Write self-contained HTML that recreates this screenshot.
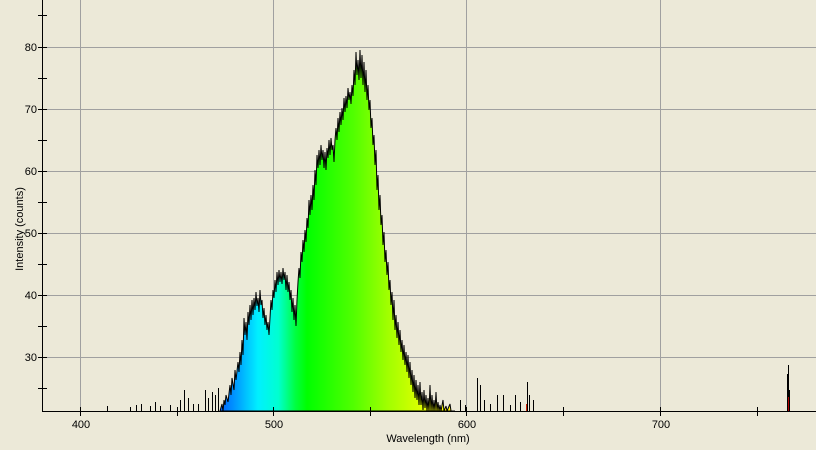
<!DOCTYPE html>
<html><head><meta charset="utf-8"><style>
html,body{margin:0;padding:0;background:#ECE9D8;}
svg{display:block;font-family:"Liberation Sans",sans-serif;}
</style></head><body>
<svg width="816" height="450" xmlns="http://www.w3.org/2000/svg">
<defs>
<linearGradient id="g" gradientUnits="userSpaceOnUse" x1="215" y1="0" x2="790" y2="0">
<stop offset="0" stop-color="#0050ff"/>
<stop offset="0.035" stop-color="#0098ff"/>
<stop offset="0.075" stop-color="#00f0ff"/>
<stop offset="0.11" stop-color="#00ffd0"/>
<stop offset="0.14" stop-color="#00ff40"/>
<stop offset="0.16" stop-color="#00ff00"/>
<stop offset="0.24" stop-color="#50ff00"/>
<stop offset="0.30" stop-color="#a0ff00"/>
<stop offset="0.37" stop-color="#e8ff00"/>
<stop offset="0.40" stop-color="#ffff00"/>
<stop offset="0.50" stop-color="#ffa000"/>
<stop offset="0.55" stop-color="#e02000"/>
<stop offset="1" stop-color="#a00000"/>
</linearGradient>
</defs>
<g stroke="#a0a0a0" stroke-width="1">
<line x1="80.5" y1="0" x2="80.5" y2="411"/><line x1="273.5" y1="0" x2="273.5" y2="411"/>
<line x1="466.5" y1="0" x2="466.5" y2="411"/><line x1="660.5" y1="0" x2="660.5" y2="411"/>
<line x1="42" y1="47.5" x2="816" y2="47.5"/><line x1="42" y1="109.5" x2="816" y2="109.5"/>
<line x1="42" y1="171.5" x2="816" y2="171.5"/><line x1="42" y1="233.5" x2="816" y2="233.5"/>
<line x1="42" y1="295.5" x2="816" y2="295.5"/><line x1="42" y1="357.5" x2="816" y2="357.5"/>
</g>
<path fill="url(#g)" stroke="#000" stroke-width="1" stroke-linejoin="bevel" d="M220,411 L222,404 223,411 224,400 225,405 226,395 228,402 230,385 231,395 232,378 234,390 235,370 236,380 238,362 239,372 240,352 241,365 242,340 243,355 244,318 245,335 246,322 247,340 248,312 249,325 250,305 251,320 252,300 253,315 254,298 255,310 256,292 257,306 258,298 259,312 260,290 261,305 262,300 263,318 264,308 265,325 266,315 267,330 268,322 269,335 270,318 271,300 272,310 273,290 274,298 275,280 276,292 277,272 278,285 279,270 280,282 281,272 282,284 283,268 284,280 285,272 286,290 287,275 288,292 289,282 290,300 291,290 292,312 293,298 294,320 295,305 296,326 297,300 298,282 299,268 300,278 301,252 302,262 303,240 304,252 305,230 306,242 307,218 308,228 309,200 310,215 311,195 312,210 313,185 314,200 315,170 316,185 317,155 318,168 319,150 320,165 321,145 322,160 323,150 324,168 325,152 326,170 327,148 328,158 329,140 330,155 331,138 332,150 333,145 334,162 335,140 336,128 337,140 338,118 339,132 340,112 341,125 342,108 343,120 344,98 345,112 346,96 347,108 348,88 349,100 350,92 351,104 352,85 353,96 354,70 355,85 356,52 357,75 358,60 359,80 360,50 361,78 362,55 363,85 364,62 365,92 366,70 367,100 368,85 369,110 370,100 371,128 372,118 373,145 374,135 375,165 376,150 377,190 378,175 379,210 380,195 381,225 382,215 383,245 384,232 385,262 386,250 387,275 388,262 389,290 390,280 391,305 392,292 393,320 394,300 395,330 396,315 397,338 398,322 399,345 400,330 401,352 402,340 403,360 404,345 405,365 406,352 407,372 408,355 409,378 410,362 411,385 412,370 413,392 414,375 415,398 416,380 417,400 418,385 419,405 420,382 421,405 422,392 423,410 424,390 425,408 426,395 427,411 428,398 429,411 430,385 431,411 432,395 433,411 434,400 435,411 436,392 437,411 438,402 439,411 440,405 441,411 443,400 444,411 446,406 447,411 450,404 451,411 455,411 Z"/>
<g stroke="#000" stroke-width="1">
<line x1="107.5" y1="411" x2="107.5" y2="406"/><line x1="130.5" y1="411" x2="130.5" y2="407"/>
<line x1="136.5" y1="411" x2="136.5" y2="405"/><line x1="141.5" y1="411" x2="141.5" y2="404"/>
<line x1="150.5" y1="411" x2="150.5" y2="406"/><line x1="155.5" y1="411" x2="155.5" y2="402"/>
<line x1="160.5" y1="411" x2="160.5" y2="406"/><line x1="170.5" y1="411" x2="170.5" y2="405"/>
<line x1="180.5" y1="411" x2="180.5" y2="400"/><line x1="184.5" y1="411" x2="184.5" y2="390"/>
<line x1="188.5" y1="411" x2="188.5" y2="398"/><line x1="193.5" y1="411" x2="193.5" y2="404"/>
<line x1="198.5" y1="411" x2="198.5" y2="404"/><line x1="205.5" y1="411" x2="205.5" y2="390"/>
<line x1="208.5" y1="411" x2="208.5" y2="398"/><line x1="212.5" y1="411" x2="212.5" y2="392"/>
<line x1="215.5" y1="411" x2="215.5" y2="395"/><line x1="218.5" y1="411" x2="218.5" y2="388"/>
<line x1="460.5" y1="411" x2="460.5" y2="400"/><line x1="465.5" y1="411" x2="465.5" y2="405"/>
<line x1="477.5" y1="411" x2="477.5" y2="378"/><line x1="480.5" y1="411" x2="480.5" y2="385"/>
<line x1="484.5" y1="411" x2="484.5" y2="400"/><line x1="490.5" y1="411" x2="490.5" y2="404"/>
<line x1="497.5" y1="411" x2="497.5" y2="395"/><line x1="503.5" y1="411" x2="503.5" y2="395"/>
<line x1="510.5" y1="411" x2="510.5" y2="405"/><line x1="515.5" y1="411" x2="515.5" y2="395"/>
<line x1="520.5" y1="411" x2="520.5" y2="402"/><line x1="527.5" y1="411" x2="527.5" y2="382"/>
<line x1="529.5" y1="411" x2="529.5" y2="395"/><line x1="533.5" y1="411" x2="533.5" y2="400"/>
<line x1="563.5" y1="411" x2="563.5" y2="408"/>
<line x1="787.5" y1="411" x2="787.5" y2="374"/><line x1="788.5" y1="411" x2="788.5" y2="365"/>
<line x1="789.5" y1="411" x2="789.5" y2="390"/>
</g>
<line x1="526.5" y1="411" x2="526.5" y2="404" stroke="#d02000"/>
<line x1="788.5" y1="411" x2="788.5" y2="397" stroke="#b00000"/>
<g stroke="#000" stroke-width="1">
<line x1="42.5" y1="0" x2="42.5" y2="412"/><line x1="42" y1="411.5" x2="816" y2="411.5"/>
<line x1="38" y1="15.5" x2="47" y2="15.5"/><line x1="38" y1="47.5" x2="47" y2="47.5"/>
<line x1="38" y1="78.5" x2="47" y2="78.5"/><line x1="38" y1="109.5" x2="47" y2="109.5"/>
<line x1="38" y1="140.5" x2="47" y2="140.5"/><line x1="38" y1="171.5" x2="47" y2="171.5"/>
<line x1="38" y1="202.5" x2="47" y2="202.5"/><line x1="38" y1="233.5" x2="47" y2="233.5"/>
<line x1="38" y1="264.5" x2="47" y2="264.5"/><line x1="38" y1="295.5" x2="47" y2="295.5"/>
<line x1="38" y1="326.5" x2="47" y2="326.5"/><line x1="38" y1="357.5" x2="47" y2="357.5"/>
<line x1="38" y1="388.5" x2="47" y2="388.5"/>
<line x1="80.5" y1="407" x2="80.5" y2="416"/><line x1="177.5" y1="407" x2="177.5" y2="416"/>
<line x1="273.5" y1="407" x2="273.5" y2="416"/><line x1="370.5" y1="407" x2="370.5" y2="416"/>
<line x1="466.5" y1="407" x2="466.5" y2="416"/><line x1="563.5" y1="407" x2="563.5" y2="416"/>
<line x1="660.5" y1="407" x2="660.5" y2="416"/><line x1="757.5" y1="407" x2="757.5" y2="416"/>
</g>
<g font-size="11" fill="#000" text-anchor="end">
<text x="37" y="51">80</text><text x="37" y="113">70</text><text x="37" y="175">60</text>
<text x="37" y="237">50</text><text x="37" y="299">40</text><text x="37" y="361">30</text>
</g>
<g font-size="11" fill="#000" text-anchor="middle">
<text x="81" y="428">400</text><text x="274" y="428">500</text><text x="467" y="428">600</text><text x="661" y="428">700</text>
<text x="428" y="442">Wavelength (nm)</text>
</g>
<text font-size="11" transform="translate(23,229) rotate(-90)" text-anchor="middle">Intensity (counts)</text>
</svg>
</body></html>
